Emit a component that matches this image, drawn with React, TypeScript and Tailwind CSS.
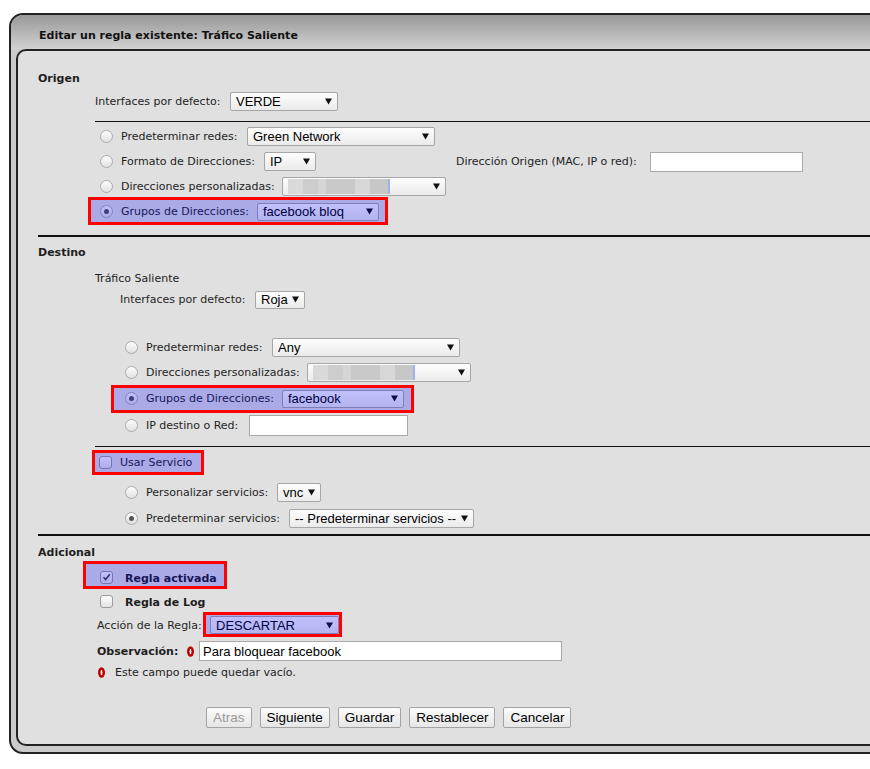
import React from "react";

const Tri = () => (
  <svg width="7" height="7" viewBox="0 0 7 7" className="shrink-0">
    <path d="M0 0.5H7L3.5 6.5Z" fill="#111" />
  </svg>
);

function Sel({
  w,
  h = "h-[19px]",
  children,
}: {
  w: string;
  h?: string;
  children?: React.ReactNode;
}) {
  return (
    <div
      className={`${w} ${h} shrink-0 flex items-center justify-between rounded-[2px] border border-[#a6a6a6] bg-linear-to-b from-[#fdfdfd] to-[#ebebeb] pl-[5px] pr-[5px] font-['Liberation_Sans',Arial,sans-serif] text-[13px] leading-none text-black`}
    >
      <span className="flex items-center whitespace-nowrap">{children}</span>
      <Tri />
    </div>
  );
}

function Blur() {
  return (
    <span className="flex h-[15px] items-stretch">
      <span className="w-[15px] bg-[#d9d9d9]" />
      <span className="w-[15px] bg-[#cdcdcd]" />
      <span className="w-[8px] bg-[#d5d5d5]" />
      <span className="w-[29px] bg-[#c9c9c9]" />
      <span className="w-[15px] bg-[#d7d7d7]" />
      <span className="w-[18px] bg-[#c7c7c7]" />
      <span className="w-[2px] bg-[#9fb0ea]" />
    </span>
  );
}

function Inp({ w, h = "h-[20px]", children }: { w: string; h?: string; children?: React.ReactNode }) {
  return (
    <div
      className={`${w} ${h} shrink-0 flex items-center border border-[#a9a9a9] bg-white pl-[3px] font-['Liberation_Sans',Arial,sans-serif] text-[13px] leading-none text-black`}
    >
      {children}
    </div>
  );
}

function Rd({ checked }: { checked?: boolean }) {
  return (
    <div className="w-[13px] h-[13px] shrink-0 rounded-full border border-[#ababab] bg-linear-to-b from-[#fdfdfd] to-[#e1e1e1] flex items-center justify-center">
      {checked && <div className="w-[5px] h-[5px] rounded-full bg-[#555]" />}
    </div>
  );
}

function Cb({ checked }: { checked?: boolean }) {
  return (
    <div className="w-[13px] h-[13px] shrink-0 rounded-[3px] border border-[#9c9c9c] bg-linear-to-b from-[#fdfdfd] to-[#e3e3e3] flex items-center justify-center">
      {checked && (
        <svg width="9" height="8" viewBox="0 0 9 8">
          <path d="M1.5 4.3L3.6 6.5L7.8 1.2" stroke="#444" strokeWidth="1.6" fill="none" />
        </svg>
      )}
    </div>
  );
}

const Warn = () => (
  <svg width="7" height="11" viewBox="0 0 7 11" className="shrink-0">
    <ellipse cx="3.5" cy="5.5" rx="3.5" ry="5.2" fill="#c00000" />
    <ellipse cx="3.5" cy="5.5" rx="0.9" ry="2.7" fill="#fff" />
  </svg>
);

function Hi({ cls }: { cls: string }) {
  return (
    <div
      className={`absolute z-10 pointer-events-none border-[3px] border-[#ff0000] bg-[rgba(0,0,255,0.24)] ${cls}`}
    />
  );
}

function Btn({ children, disabled }: { children: React.ReactNode; disabled?: boolean }) {
  return (
    <div
      className={`h-[21px] flex items-center px-[6px] rounded-[2px] border border-[#a3a3a3] bg-linear-to-b from-[#fbfbfb] to-[#e6e6e6] font-['Liberation_Sans',Arial,sans-serif] text-[13.5px] leading-none ${
        disabled ? "text-[#9a9a9a]" : "text-black"
      }`}
    >
      {children}
    </div>
  );
}

export default function App() {
  return (
    <div className="relative w-[870px] h-[769px] overflow-hidden bg-white font-['DejaVu_Sans',Verdana,sans-serif] text-[11px] leading-none text-[#1e1e1e]">
      {/* outer box */}
      <div className="mt-[13px] ml-[9px] w-[920px] rounded-l-[14px] border-2 border-[#222] bg-[#cbcbcb]">
        {/* header */}
        <div className="h-[34px] rounded-tl-[12px] bg-linear-to-b from-[#989898] to-[#d2d2d2] flex items-center pt-[6px] pl-[28px] font-bold text-[#111]">
          Editar un regla existente: Tráfico Saliente
        </div>
        {/* inner box */}
        <div className="ml-[5px] mb-[6px] rounded-l-[10px] border-2 border-[#222] bg-[#e0e0e0] pb-[16px]">
          {/* Origen */}
          <div className="mt-[19px] h-[16px] ml-[20px] flex items-center font-bold">Origen</div>
          <div className="mt-[6px] h-[19px] ml-[77px] flex items-center">
            <span className="w-[135px] whitespace-nowrap">Interfaces por defecto:</span>
            <Sel w="w-[108px]">VERDE</Sel>
          </div>
          <div className="mt-[10px] h-px ml-[77px] bg-[#111]" />
          <div className="mt-[2px] ml-[77px]">
            <div className="h-[25px] flex items-center">
              <span className="ml-[5px]"><Rd /></span>
              <span className="ml-[8px] w-[126px] whitespace-nowrap">Predeterminar redes:</span>
              <Sel w="w-[188px]">Green Network</Sel>
            </div>
            <div className="h-[25px] flex items-center">
              <div className="w-[361px] flex items-center">
                <span className="ml-[5px]"><Rd /></span>
                <span className="ml-[8px] w-[143px] whitespace-nowrap">Formato de Direcciones:</span>
                <Sel w="w-[52px]">IP</Sel>
              </div>
              <span className="w-[194px] whitespace-nowrap">Dirección Origen (MAC, IP o red):</span>
              <Inp w="w-[153px]" />
            </div>
            <div className="h-[25px] flex items-center">
              <span className="ml-[5px]"><Rd /></span>
              <span className="ml-[8px] w-[161px] whitespace-nowrap">Direcciones personalizadas:</span>
              <Sel w="w-[164px]">
                <Blur />
              </Sel>
            </div>
            <div className="relative h-[25px] flex items-center">
              <span className="ml-[5px]"><Rd checked /></span>
              <span className="ml-[8px] w-[136px] whitespace-nowrap">Grupos de Direcciones:</span>
              <Sel w="w-[122px]" h="h-[18px]">facebook bloq</Sel>
              <Hi cls="left-[-7px] top-[-2px] w-[300px] h-[28px]" />
            </div>
          </div>
          <div className="mt-[11px] h-[2px] ml-[20px] bg-[#111]" />

          {/* Destino */}
          <div className="mt-[7px] h-[16px] ml-[20px] flex items-center font-bold">Destino</div>
          <div className="mt-[10px] h-[16px] ml-[77px] flex items-center">Tráfico Saliente</div>
          <div className="mt-[4px] h-[19px] ml-[102px] flex items-center">
            <span className="w-[135px] whitespace-nowrap">Interfaces por defecto:</span>
            <Sel w="w-[50px]" h="h-[18px]">Roja</Sel>
          </div>
          <div className="mt-[26px] ml-[102px]">
            <div className="h-[25px] flex items-center">
              <span className="ml-[5px]"><Rd /></span>
              <span className="ml-[8px] w-[126px] whitespace-nowrap">Predeterminar redes:</span>
              <Sel w="w-[188px]">Any</Sel>
            </div>
            <div className="h-[25px] flex items-center">
              <span className="ml-[5px]"><Rd /></span>
              <span className="ml-[8px] w-[161px] whitespace-nowrap">Direcciones personalizadas:</span>
              <Sel w="w-[164px]">
                <Blur />
              </Sel>
            </div>
            <div className="relative h-[27px] flex items-center">
              <span className="ml-[5px]"><Rd checked /></span>
              <span className="ml-[8px] w-[136px] whitespace-nowrap">Grupos de Direcciones:</span>
              <Sel w="w-[122px]" h="h-[18px]">facebook</Sel>
              <Hi cls="left-[-9px] top-[0px] w-[303px] h-[28px]" />
            </div>
            <div className="h-[26px] flex items-center">
              <span className="ml-[5px]"><Rd /></span>
              <span className="ml-[8px] w-[103px] whitespace-nowrap">IP destino o Red:</span>
              <Inp w="w-[159px]" h="h-[21px]" />
            </div>
          </div>
          <div className="mt-[8px] h-px ml-[77px] bg-[#111]" />
          <div className="relative mt-[3px] h-[25px] ml-[77px] flex items-center">
            <span className="ml-[4px]"><Cb /></span>
            <span className="ml-[8px] whitespace-nowrap">Usar Servicio</span>
            <Hi cls="left-[-3px] top-[0px] w-[112px] h-[25px]" />
          </div>
          <div className="mt-[5px] ml-[102px]">
            <div className="h-[25px] flex items-center">
              <span className="ml-[5px]"><Rd /></span>
              <span className="ml-[8px] w-[131px] whitespace-nowrap">Personalizar servicios:</span>
              <Sel w="w-[44px]">vnc</Sel>
            </div>
            <div className="mt-[1px] h-[25px] flex items-center">
              <span className="ml-[5px]"><Rd checked /></span>
              <span className="ml-[8px] w-[143px] whitespace-nowrap">Predeterminar servicios:</span>
              <Sel w="w-[185px]">-- Predeterminar servicios --</Sel>
            </div>
          </div>
          <div className="mt-[3px] h-[2px] ml-[20px] bg-[#111]" />

          {/* Adicional */}
          <div className="mt-[8px] h-[16px] ml-[20px] flex items-center font-bold">Adicional</div>
          <div className="relative mt-[6px] h-[25px] ml-[82px] flex items-center">
            <span className="mb-[3px]"><Cb checked /></span>
            <span className="ml-[12px] font-bold whitespace-nowrap">Regla activada</span>
            <Hi cls="left-[-17px] top-[-5px] w-[144px] h-[28px]" />
          </div>
          <div className="h-[23px] ml-[82px] flex items-center">
            <span className="mb-[3px]"><Cb /></span>
            <span className="ml-[12px] font-bold whitespace-nowrap">Regla de Log</span>
          </div>
          <div className="relative h-[22px] ml-[79px] flex items-center">
            <span className="w-[113px] whitespace-nowrap">Acción de la Regla:</span>
            <Sel w="w-[129px]" h="h-[18px]">DESCARTAR</Sel>
            <Hi cls="left-[106px] top-[-2px] w-[139px] h-[25px]" />
          </div>
          <div className="mt-[4px] h-[22px] ml-[79px] flex items-center">
            <span className="w-[90px] font-bold whitespace-nowrap">Observación:</span>
            <Warn />
            <span className="ml-[5px]">
              <Inp w="w-[363px]">Para bloquear facebook</Inp>
            </span>
          </div>
          <div className="mt-[2px] h-[16px] ml-[80px] flex items-center">
            <Warn />
            <span className="ml-[10px] whitespace-nowrap">Este campo puede quedar vacío.</span>
          </div>
          <div className="mt-[27px] ml-[188px] flex items-center gap-[8px]">
            <Btn disabled>Atras</Btn>
            <Btn>Siguiente</Btn>
            <Btn>Guardar</Btn>
            <Btn>Restablecer</Btn>
            <Btn>Cancelar</Btn>
          </div>
        </div>
      </div>
    </div>
  );
}
